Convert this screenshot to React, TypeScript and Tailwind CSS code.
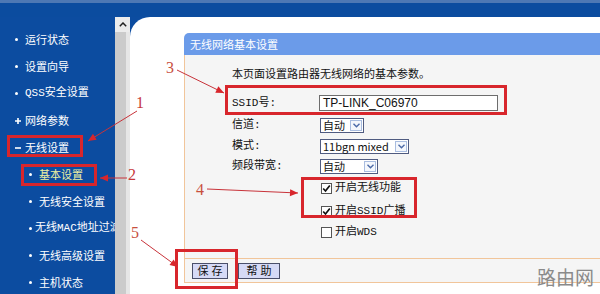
import React from "react";

const CJK = "font-['Noto_Sans_CJK_SC',sans-serif]";
const MONO = "font-['Liberation_Mono','Noto_Sans_CJK_SC',monospace]";

function Dot() {
  return <span className="inline-block w-[3px] h-[3px] rounded-full bg-white" />;
}

function NavItem({
  label,
  level,
  icon,
  active,
  mono,
}: {
  label: string;
  level: 1 | 2;
  icon: "dot" | "plus" | "minus";
  active?: boolean;
  mono?: boolean;
}) {
  return (
    <div
      className={`h-[27px] flex items-center whitespace-nowrap ${
        level === 1 ? "pl-[15px]" : "pl-[29px]"
      }`}
    >
      <span className="w-[7px] flex items-center">
        {icon === "dot" && <Dot />}
        {icon === "plus" && (
          <svg width="6" height="6" viewBox="0 0 6 6">
            <path d="M0 3H6M3 0V6" stroke="#fff" strokeWidth="1.6" />
          </svg>
        )}
        {icon === "minus" && (
          <svg width="6" height="6" viewBox="0 0 6 6">
            <path d="M0 3H6" stroke="#fff" strokeWidth="1.6" />
          </svg>
        )}
      </span>
      <span
        className={`ml-[3px] text-[11px] leading-none ${mono ? MONO : CJK} ${
          active ? "text-[#eef0a0]" : "text-white"
        }`}
      >
        {label}
      </span>
    </div>
  );
}

function Select({ text, width }: { text: string; width: string }) {
  return (
    <div
      className={`${width} h-[15px] border border-[#4f5b80] bg-white flex items-center justify-between pl-[2px] pr-[1px]`}
    >
      <span className={`text-[11px] leading-none text-[#111] ${CJK} font-['Liberation_Sans','Noto_Sans_CJK_SC',sans-serif]`}>
        {text}
      </span>
      <span className="w-[12px] h-[11px] border border-[#a9bde0] bg-[#f4f7fc] flex items-center justify-center">
        <svg width="7" height="5" viewBox="0 0 7 5">
          <path d="M0.5 0.8L3.5 3.8L6.5 0.8" fill="none" stroke="#4b6aa8" strokeWidth="1.4" />
        </svg>
      </span>
    </div>
  );
}

function Checkbox({ checked, label }: { checked: boolean; label: string }) {
  return (
    <div className="flex items-center pl-[1px]">
      <span className="w-[11px] h-[11px] border border-[#555] bg-white flex items-center justify-center">
        {checked && (
          <svg width="9" height="9" viewBox="0 0 9 9">
            <path d="M1.2 4.5L3.5 7L7.8 1.5" fill="none" stroke="#111" strokeWidth="1.7" />
          </svg>
        )}
      </span>
      <span className={`ml-[3px] text-[11px] leading-none text-[#111] ${MONO}`}>{label}</span>
    </div>
  );
}

function Row({ h, label, children }: { h: string; label?: React.ReactNode; children: React.ReactNode }) {
  return (
    <div className={`${h} flex items-center`}>
      <div className={`w-[88px] text-[11px] leading-none text-[#111] ${MONO}`}>{label}</div>
      {children}
    </div>
  );
}

function arrowHead(tx: number, ty: number, fx: number, fy: number, len = 8, half = 3.5) {
  const dx = tx - fx;
  const dy = ty - fy;
  const d = Math.hypot(dx, dy);
  const ux = dx / d;
  const uy = dy / d;
  const bx = tx - ux * len;
  const by = ty - uy * len;
  const px = -uy * half;
  const py = ux * half;
  return `${tx},${ty} ${bx + px},${by + py} ${bx - px},${by - py}`;
}

const arrows = [
  { fx: 137, fy: 111, tx: 88, ty: 141 },
  { fx: 127, fy: 178, tx: 100, ty: 178 },
  { fx: 177, fy: 70, tx: 224, ty: 93 },
  { fx: 207, fy: 189, tx: 298, ty: 193 },
  { fx: 141, fy: 240, tx: 178, ty: 267 },
];

export default function App() {
  return (
    <div className="relative w-[600px] h-[294px] overflow-hidden bg-[#0c4ca0] flex flex-col">
      {/* top bar */}
      <div className="h-[17px] shrink-0 flex flex-col">
        <div className="h-[3px] bg-[#4d78b4]" />
        <div className="flex-1 bg-[#0b4c9f]" />
      </div>

      <div className="flex-1 flex min-h-0">
        {/* sidebar */}
        <div className="w-[115px] shrink-0 overflow-hidden pt-[9px]">
          <NavItem level={1} icon="dot" label="运行状态" />
          <NavItem level={1} icon="dot" label="设置向导" />
          <NavItem level={1} icon="dot" label="QSS安全设置" mono />
          <NavItem level={1} icon="plus" label="网络参数" />
          <NavItem level={1} icon="minus" label="无线设置" />
          <NavItem level={2} icon="dot" label="基本设置" active />
          <NavItem level={2} icon="dot" label="无线安全设置" />
          <NavItem level={2} icon="dot" label="无线MAC地址过滤" mono />
          <NavItem level={2} icon="dot" label="无线高级设置" />
          <NavItem level={2} icon="dot" label="主机状态" />
        </div>

        {/* scrollbar */}
        <div className="w-[15px] shrink-0 flex flex-col">
          <div className="h-[15px] bg-[#ececec] flex items-center justify-center">
            <svg width="8" height="5" viewBox="0 0 8 5">
              <path d="M0.8 4.2L4 1L7.2 4.2" fill="none" stroke="#222" strokeWidth="1.5" />
            </svg>
          </div>
          <div className="flex-1 bg-[#cbcbcb] border-r-[4px] border-[#e6e6e6]" />
        </div>

        {/* main */}
        <div className="flex-1 bg-white rounded-tl-[20px] pl-[54px] pt-[16px] flex flex-col">
          <div
            className={`h-[22px] shrink-0 bg-[#6b9be9] rounded-tl-[5px] pl-[6px] flex items-center text-white text-[11px] leading-none ${CJK}`}
          >
            无线网络基本设置
          </div>
          <div className="bg-[#f5f5f5] border-l border-b border-[#f1c59a] pl-[47px]">
            <div className={`mt-[8px] h-[20px] flex items-center text-[11px] leading-none text-[#111] ${CJK}`}>
              本页面设置路由器无线网络的基本参数。
            </div>
            <div className="mt-[9px]">
              <Row h="h-[22px]" label="SSID号:">
                <div className="w-[179px] h-[16px] -ml-[1px] border border-[#6d6d6d] bg-white flex items-center pl-[3px]">
                  <span className="text-[12px] leading-none text-[#111] font-['Liberation_Sans',sans-serif]">
                    TP-LINK_C06970
                  </span>
                </div>
              </Row>
              <Row h="h-[22px]" label="信道:">
                <Select text="自动" width="w-[44px]" />
              </Row>
              <Row h="h-[20px]" label="模式:">
                <Select text="11bgn mixed" width="w-[89px]" />
              </Row>
              <Row h="h-[20px]" label="频段带宽:">
                <Select text="自动" width="w-[58px]" />
              </Row>
              <Row h="h-[24px]">
                <Checkbox checked label="开启无线功能" />
              </Row>
              <Row h="h-[22px]">
                <Checkbox checked label="开启SSID广播" />
              </Row>
              <Row h="h-[20px]">
                <Checkbox checked={false} label="开启WDS" />
              </Row>
            </div>
            <div className="h-[16px]" />
          </div>
          <div className="h-[24px] bg-[#f5f5f5] border-l border-b border-[#f1c59a] flex items-center pl-[7px] gap-[10px]">
            <button className={`w-[36px] h-[16px] bg-[#d6daf6] border border-[#4a4f6a] text-[11px] leading-none text-[#111] tracking-[3px] pl-[3px] ${CJK}`}>
              保存
            </button>
            <button className={`w-[42px] h-[16px] bg-[#d6daf6] border border-[#4a4f6a] text-[11px] leading-none text-[#111] tracking-[3px] pl-[3px] ${CJK}`}>
              帮助
            </button>
          </div>
        </div>
      </div>

      {/* annotations overlay */}
      <div className="absolute inset-0 pointer-events-none">
        <div className="absolute left-[7px] top-[135px] w-[76px] h-[22px] border-[3px] border-[#d8262c]" />
        <div className="absolute left-[21px] top-[164px] w-[76px] h-[22px] border-[3px] border-[#d8262c]" />
        <div className="absolute left-[225px] top-[85px] w-[282px] h-[30px] border-[3px] border-[#d8262c]" />
        <div className="absolute left-[301px] top-[177px] w-[116px] h-[41px] border-[3px] border-[#d8262c]" />
        <div className="absolute left-[175px] top-[249px] w-[63px] h-[40px] border-[3px] border-[#d8262c]" />

        <svg className="absolute inset-0" width="600" height="294" viewBox="0 0 600 294">
          {arrows.map((a, i) => (
            <g key={i}>
              <line x1={a.fx} y1={a.fy} x2={a.tx} y2={a.ty} stroke="#c8333a" strokeWidth="1" />
              <polygon points={arrowHead(a.tx, a.ty, a.fx, a.fy)} fill="#d8262c" />
            </g>
          ))}
        </svg>

        <span className="absolute left-[136px] top-[95px] text-[16px] leading-none text-[#c8383a] font-['Liberation_Serif',serif]">1</span>
        <span className="absolute left-[128px] top-[167px] text-[16px] leading-none text-[#c8383a] font-['Liberation_Serif',serif]">2</span>
        <span className="absolute left-[166px] top-[60px] text-[16px] leading-none text-[#c8503e] font-['Liberation_Serif',serif]">3</span>
        <span className="absolute left-[196px] top-[182px] text-[16px] leading-none text-[#c8503e] font-['Liberation_Serif',serif]">4</span>
        <span className="absolute left-[131px] top-[225px] text-[16px] leading-none text-[#c8503e] font-['Liberation_Serif',serif]">5</span>

        <span className={`absolute left-[537px] top-[267px] text-[19px] leading-none text-[#8a8a8a] ${CJK}`}>路由网</span>
      </div>
    </div>
  );
}
